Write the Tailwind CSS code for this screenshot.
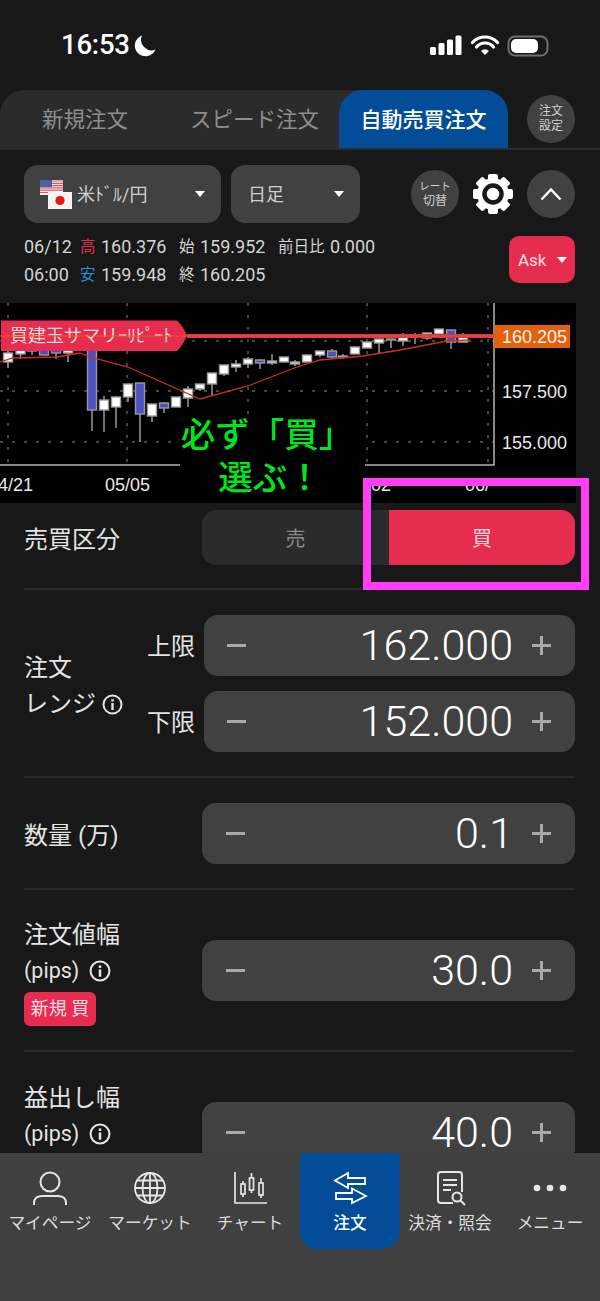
<!DOCTYPE html>
<html lang="ja">
<head>
  <meta charset="UTF-8" />
  <meta name="viewport" content="width=device-width, initial-scale=1.0" />
  <title>自動売買注文</title>
  <script src="https://cdn.jsdelivr.net/npm/@tailwindcss/browser@4"></script>
</head>
<body class="bg-[#181818] font-['Roboto','Noto_Sans_CJK_JP',sans-serif] text-[#e6e6e6]">
<div class="relative flex flex-col w-[600px] h-[1301px] overflow-hidden">

  <!-- status bar -->
  <div class="flex items-center h-[90px] shrink-0 pl-[61px] pr-[50px]">
    <span class="text-[27.500px] font-medium text-white tracking-[-0.2px]">16:53</span>
    <svg class="ml-[4px]" width="23" height="23" viewBox="0 0 23 23"><path d="M8 1.500a10.500 10.500 0 0 0 13.500 14A10.700 10.700 0 1 1 8 1.500z" fill="#fff"/></svg>
    <svg class="ml-auto" width="120" height="24" viewBox="0 0 120 24">
      <rect x="0" y="14" width="6" height="8" rx="1.500" fill="#fff"/>
      <rect x="8.500" y="10" width="6" height="12" rx="1.500" fill="#fff"/>
      <rect x="17" y="6.500" width="6" height="15.500" rx="1.500" fill="#fff"/>
      <rect x="25.500" y="2.500" width="6" height="19.500" rx="1.500" fill="#fff"/>
      <path d="M42.500 9.500a17 17 0 0 1 25 0M46.500 14a11 11 0 0 1 17 0" fill="none" stroke="#fff" stroke-width="3.200" stroke-linecap="round"/>
      <path d="M51 18a5.500 5.500 0 0 1 8 0l-4 4z" fill="#fff"/>
      <rect x="78.500" y="3.500" width="39" height="19" rx="6.500" fill="none" stroke="#6f6f6f" stroke-width="2"/>
      <rect x="81" y="6" width="27" height="14" rx="5" fill="#fff"/>
    </svg>
  </div>

  <!-- order type tabs -->
  <div class="flex items-start h-[60px] shrink-0 border-b-2 border-[#2c2c2c]">
    <div class="flex w-[508px] h-[58px] rounded-tl-[24px] rounded-tr-[24px] bg-[#2b2b2b] text-[21.500px] text-[#8e8e8e]">
      <div class="flex items-center justify-center w-[170px] pt-[3px]">新規注文</div>
      <div class="flex items-center justify-center w-[169px] pt-[3px]">スピード注文</div>
      <div class="flex items-center justify-center w-[169px] pt-[3px] rounded-t-[24px] bg-[#024c98] text-[21px] font-medium text-white">自動売買注文</div>
    </div>
    <div class="flex items-center justify-center w-[48px] h-[48px] mt-[5px] ml-[19px] rounded-full bg-[#414141] text-center text-[12px] leading-[15px] text-[#cfcfcf]">注文<br>設定</div>
  </div>

  <!-- pair and timeframe -->
  <div class="flex items-center h-[58px] mt-[15px] pl-[24px] pr-[25px] shrink-0">
    <div class="flex items-center w-[197px] h-[58px] rounded-[14px] bg-[#414141] pl-[16px] pr-[16px]">
      <svg width="32" height="29" viewBox="0 0 32 29">
        <rect x="0" y="0" width="23" height="15" fill="#f4f4f4"/>
        <path d="M0 1h23M0 3.300h23M0 5.600h23M0 7.900h23M0 10.200h23M0 12.500h23" stroke="#e2545b" stroke-width="1.200"/>
        <rect x="0" y="0" width="12" height="7" fill="#4d5fa8"/>
        <rect x="8" y="12" width="24" height="17" fill="#f4f4f4"/>
        <circle cx="20" cy="20.500" r="4.600" fill="#f01414"/>
      </svg>
      <span class="ml-[5px] pt-[1px] text-[18px] text-[#cfcfcf]">米ﾄﾞﾙ/円</span>
      <span class="ml-auto w-0 h-0 border-x-[5.500px] border-x-transparent border-t-[6px] border-t-white"></span>
    </div>
    <div class="flex items-center w-[129px] h-[58px] ml-[10px] rounded-[14px] bg-[#414141] pl-[17px] pr-[16px]">
      <span class="pt-[1px] text-[18px] text-[#cfcfcf]">日足</span>
      <span class="ml-auto w-0 h-0 border-x-[5.500px] border-x-transparent border-t-[6px] border-t-white"></span>
    </div>
    <div class="flex items-center justify-center w-[48px] h-[48px] ml-[51px] rounded-full bg-[#414141] text-center text-[#cfcfcf] leading-[15px]">
      <div><div class="text-[10.500px]">レート</div><div class="text-[12px]">切替</div></div>
    </div>
    <svg class="ml-[13px]" width="42" height="42" viewBox="0 0 42 42">
      <g fill="#fff">
        <rect x="16" y="1" width="10" height="40" rx="2"/>
        <rect x="16" y="1" width="10" height="40" rx="2" transform="rotate(45 21 21)"/>
        <rect x="16" y="1" width="10" height="40" rx="2" transform="rotate(90 21 21)"/>
        <rect x="16" y="1" width="10" height="40" rx="2" transform="rotate(135 21 21)"/>
        <circle cx="21" cy="21" r="16"/>
      </g>
      <circle cx="21" cy="21" r="8.500" fill="none" stroke="#181818" stroke-width="4.500"/>
    </svg>
    <div class="flex items-center justify-center w-[48px] h-[48px] ml-[13px] rounded-full bg-[#414141]">
      <svg width="22" height="14" viewBox="0 0 22 14"><path d="M1.500 12.500L11 2.500l9.500 10" fill="none" stroke="#fff" stroke-width="2.400"/></svg>
    </div>
  </div>

  <!-- ohlc -->
  <div class="flex items-center h-[47px] mt-[13px] pl-[24px] pr-[25px] shrink-0 text-[18px] text-[#d4d4d4] leading-[28px]">
    <div class="flex flex-col pt-[3px]">
      <div class="flex items-center">
        <span class="w-[56px]">06/12</span><span class="w-[21px] text-[15.500px] text-[#e82c4f]">高</span><span class="w-[78px]">160.376</span><span class="w-[21px] text-[15.500px]">始</span><span class="w-[78px]">159.952</span><span class="w-[52px] text-[15.500px]">前日比</span><span>0.000</span>
      </div>
      <div class="flex items-center">
        <span class="w-[56px]">06:00</span><span class="w-[21px] text-[15.500px] text-[#1f96dc]">安</span><span class="w-[78px]">159.948</span><span class="w-[21px] text-[15.500px]">終</span><span>160.205</span>
      </div>
    </div>
    <div class="flex items-center ml-auto w-[66px] h-[47px] rounded-[10px] bg-[#e72d4f] pl-[9px] text-[17px] text-white/85">
      Ask<span class="ml-[11px] w-0 h-0 border-x-[5.500px] border-x-transparent border-t-[6px] border-t-white"></span>
    </div>
  </div>

  <!-- chart -->
  <div class="h-[200px] w-[576px] mt-[20px] shrink-0 bg-black">
    <svg id="chart" width="576" height="200" viewBox="0 303 576 200" class="block font-['Liberation_Sans',sans-serif]"></svg>
  </div>

  <!-- form -->
  <div class="flex-1 min-h-0 overflow-hidden pl-[24px] pr-[25px]">
    <div class="flex items-start h-[87px] pt-[7px] border-b-2 border-[#2a2a2a]">
      <div class="w-[178px] h-[55px] flex items-center pt-[5px] text-[24px] text-[#e4e4e4]">売買区分</div>
      <div class="flex w-[373px] h-[55px] rounded-[14px] bg-[#2b2b2b] overflow-hidden text-[20px]">
        <div class="flex items-center justify-center w-[187px] pt-[3px] text-[#8a8a8a]">売</div>
        <div class="flex items-center justify-center flex-1 pt-[3px] bg-[#e72d4f] text-[#f5d5db]">買</div>
      </div>
    </div>

    <div class="flex items-center h-[188px] border-b-2 border-[#2a2a2a]">
      <div class="w-[123px] pt-[6px] text-[24px] leading-[36px] text-[#e4e4e4]">
        注文<br>
        <span class="flex items-center">レンジ<svg class="ml-[6px]" width="21" height="21" viewBox="0 0 21 21"><circle cx="10.500" cy="10.500" r="9" fill="none" stroke="#e4e4e4" stroke-width="2"/><rect x="9.300" y="9" width="2.400" height="7" fill="#e4e4e4"/><rect x="9.300" y="5.200" width="2.400" height="2.400" fill="#e4e4e4"/></svg></span>
      </div>
      <div class="flex-1 flex flex-col gap-[15px]">
        <div class="flex items-center">
          <span class="w-[57px] pt-[4px] text-[24px] text-[#e4e4e4]">上限</span>
          <div class="flex items-center w-[371px] h-[61px] rounded-[14px] bg-[#414141] pl-[23px] pr-[24px]">
            <span class="w-[19px] h-[3px] bg-[#a9a9a9]"></span>
            <span class="ml-auto text-[43px] font-light text-white">162.000</span>
            <svg class="ml-[19px]" width="19" height="19" viewBox="0 0 19 19"><path d="M0 9.500h19M9.500 0v19" stroke="#a9a9a9" stroke-width="3"/></svg>
          </div>
        </div>
        <div class="flex items-center">
          <span class="w-[57px] pt-[4px] text-[24px] text-[#e4e4e4]">下限</span>
          <div class="flex items-center w-[371px] h-[61px] rounded-[14px] bg-[#414141] pl-[23px] pr-[24px]">
            <span class="w-[19px] h-[3px] bg-[#a9a9a9]"></span>
            <span class="ml-auto text-[43px] font-light text-white">152.000</span>
            <svg class="ml-[19px]" width="19" height="19" viewBox="0 0 19 19"><path d="M0 9.500h19M9.500 0v19" stroke="#a9a9a9" stroke-width="3"/></svg>
          </div>
        </div>
      </div>
    </div>

    <div class="flex items-center h-[112px] border-b-2 border-[#2a2a2a]">
      <div class="w-[178px] pt-[5px] text-[24px] text-[#e4e4e4]">数量 (万)</div>
      <div class="flex items-center w-[373px] h-[61px] rounded-[14px] bg-[#414141] pl-[24px] pr-[24px]">
        <span class="w-[19px] h-[3px] bg-[#a9a9a9]"></span>
        <span class="ml-auto text-[43px] font-light text-white">0.1</span>
        <svg class="ml-[19px]" width="19" height="19" viewBox="0 0 19 19"><path d="M0 9.500h19M9.500 0v19" stroke="#a9a9a9" stroke-width="3"/></svg>
      </div>
    </div>

    <div class="flex items-center h-[162px] border-b-2 border-[#2a2a2a]">
      <div class="w-[178px] pt-[2px] text-[24px] text-[#e4e4e4]">
        <div class="leading-[36px]">注文値幅</div>
        <div class="flex items-center leading-[36px] text-[21.500px]">(pips)<svg class="ml-[10px]" width="22" height="22" viewBox="0 0 21 21"><circle cx="10.500" cy="10.500" r="9" fill="none" stroke="#e4e4e4" stroke-width="2"/><rect x="9.300" y="9" width="2.400" height="7" fill="#e4e4e4"/><rect x="9.300" y="5.200" width="2.400" height="2.400" fill="#e4e4e4"/></svg></div>
        <div class="flex items-center justify-center mt-[3px] w-[72px] h-[34px] rounded-[6px] bg-[#e72d4f] text-[18px] text-[#f8dfe3]">新規 買</div>
      </div>
      <div class="flex items-center w-[373px] h-[61px] rounded-[14px] bg-[#414141] pl-[24px] pr-[24px]">
        <span class="w-[19px] h-[3px] bg-[#a9a9a9]"></span>
        <span class="ml-auto text-[43px] font-light text-white">30.0</span>
        <svg class="ml-[19px]" width="19" height="19" viewBox="0 0 19 19"><path d="M0 9.500h19M9.500 0v19" stroke="#a9a9a9" stroke-width="3"/></svg>
      </div>
    </div>

    <div class="flex items-start pt-[28px]">
      <div class="w-[178px] text-[24px] text-[#e4e4e4]">
        <div class="leading-[36px]">益出し幅</div>
        <div class="flex items-center leading-[36px] text-[21.500px]">(pips)<svg class="ml-[10px]" width="22" height="22" viewBox="0 0 21 21"><circle cx="10.500" cy="10.500" r="9" fill="none" stroke="#e4e4e4" stroke-width="2"/><rect x="9.300" y="9" width="2.400" height="7" fill="#e4e4e4"/><rect x="9.300" y="5.200" width="2.400" height="2.400" fill="#e4e4e4"/></svg></div>
      </div>
      <div class="flex items-center w-[373px] h-[61px] mt-[22px] rounded-[14px] bg-[#414141] pl-[24px] pr-[24px]">
        <span class="w-[19px] h-[3px] bg-[#a9a9a9]"></span>
        <span class="ml-auto text-[43px] font-light text-white">40.0</span>
        <svg class="ml-[19px]" width="19" height="19" viewBox="0 0 19 19"><path d="M0 9.500h19M9.500 0v19" stroke="#a9a9a9" stroke-width="3"/></svg>
      </div>
    </div>
  </div>

  <!-- bottom nav -->
  <div class="flex items-start h-[148px] shrink-0 bg-[#404040] text-[16.700px] text-[#dcdcdc]">
    <div class="flex flex-col items-center w-[100px] pt-[17px]">
      <svg width="36" height="36" viewBox="0 0 36 36" fill="none" stroke="#e6e6e6" stroke-width="2"><circle cx="18" cy="12" r="9.500"/><path d="M2 35v-2c0-5 4-7 8-7h16c4 0 8 2 8 7v2"/></svg>
      <span class="mt-[6px] leading-[24px] whitespace-nowrap">マイページ</span>
    </div>
    <div class="flex flex-col items-center w-[100px] pt-[17px]">
      <svg width="36" height="36" viewBox="0 0 36 36" fill="none" stroke="#e6e6e6" stroke-width="1.800"><circle cx="18" cy="18" r="15"/><ellipse cx="18" cy="18" rx="7.500" ry="15"/><path d="M18 3v30M3 18h30M5 10.500h26M5 25.500h26"/></svg>
      <span class="mt-[6px] leading-[24px] whitespace-nowrap">マーケット</span>
    </div>
    <div class="flex flex-col items-center w-[100px] pt-[17px]">
      <svg width="36" height="36" viewBox="0 0 36 36" fill="none" stroke="#e6e6e6" stroke-width="1.700"><path d="M3 2v31h32"/><path d="M11 11v3M11 24v3M19.500 3v5M19.500 20v3M29 8v5M29 25v3"/><rect x="9" y="14" width="4" height="10"/><rect x="17.500" y="8" width="4" height="12"/><rect x="27" y="13" width="4" height="12"/></svg>
      <span class="mt-[6px] leading-[24px] whitespace-nowrap">チャート</span>
    </div>
    <div class="flex flex-col items-center w-[100px] h-[96px] pt-[17px] rounded-b-[18px] bg-[#024c98] text-white font-medium">
      <svg width="36" height="36" viewBox="0 0 36 36" fill="none" stroke="#fff" stroke-width="1.800"><path d="M3 10.500L16 3v5h17v6H16v4z"/><path d="M34 26L20 18.500V23H4v6h16v4z"/></svg>
      <span class="mt-[6px] leading-[24px] whitespace-nowrap">注文</span>
    </div>
    <div class="flex flex-col items-center w-[100px] pt-[17px]">
      <svg width="36" height="36" viewBox="0 0 36 36" fill="none" stroke="#e6e6e6" stroke-width="2"><path d="M21 33H9a3 3 0 0 1-3-3V5a3 3 0 0 1 3-3h18a3 3 0 0 1 3 3v17"/><path d="M11 10h14M11 15h14M11 20h8"/><circle cx="25" cy="27" r="4.500"/><path d="M28.500 30.500L33 35"/></svg>
      <span class="mt-[6px] leading-[24px] whitespace-nowrap">決済・照会</span>
    </div>
    <div class="flex flex-col items-center w-[100px] pt-[17px]">
      <svg width="36" height="36" viewBox="0 0 36 36" fill="#e6e6e6"><circle cx="5" cy="18" r="3.300"/><circle cx="18" cy="18" r="3.300"/><circle cx="31" cy="18" r="3.300"/></svg>
      <span class="mt-[6px] leading-[24px] whitespace-nowrap">メニュー</span>
    </div>
  </div>

  <!-- annotation drawn over the screen -->
  <div class="absolute left-[363px] top-[478px] w-[226px] h-[112px] border-[8px] border-[#ff3df5]"></div>
</div>

<script>
  // x, wick top, body top, body bottom, wick bottom, blue?
  const candles = [
    [8,350,353,362,368,0],[20.500,348,350,354,359,0],[32,348,349,351,355,0],[44,348,350,355,355,1],
    [56,348,350,353,359,1],[68,348,350,353,362,0],[92,348,350,410,431,1],[104,396,400,410,432,0],
    [116,396,397,407,428,0],[128,384,384,397,402,0],[140,383,383,414,442,1],[152,404,404,416,422,0],
    [164,402,403,408,413,1],[176,397,397,407,407,0],[188,386,389,398,407,0],[200,384,384,389,391,0],
    [212,373,373,384,395,0],[224,365,365,374,376,0],[236,360,364,367,372,0],[248,357,359,364,368,0],
    [260,359,360,363,369,1],[272,354,361,363,365,0],[284,357,357,362,362,0],[295,360,362,364,366,0],
    [307,355,355,362,362,0],[320,351,351,355,357,0],[332,349,351,357,359,1],[343,354,356,357,359,0],
    [355,347,347,354,354,0],[367,342,342,348,348,0],[379,339,339,343,353,0],[391,339,339,340,348,0],
    [403,333,337,341,346,0],[415,333,336,337,344,0],[427,333,333,338,340,0],[439,329,329,334,334,0],
    [451,330,330,342,349,1],[463,333,337,342,342,0]
  ];

  let s = '';
  // grid
  for (const y of [341, 391, 442]) s += `<line x1="0" x2="494" y1="${y}" y2="${y}" stroke="#8a8a8a" stroke-width="1" stroke-dasharray="3 9"/>`;
  for (const x of [8, 127, 248, 367, 488]) s += `<line x1="${x}" x2="${x}" y1="303" y2="465" stroke="#8a8a8a" stroke-width="1" stroke-dasharray="3 9"/>`;
  // candles
  for (const [x, wt, bt, bb, wb, blue] of candles) {
    s += `<line x1="${x}" x2="${x}" y1="${wt}" y2="${wb}" stroke="#9a9a9a" stroke-width="1.500"/>`;
    s += `<rect x="${x - 4.500}" y="${bt}" width="9" height="${Math.max(bb - bt, 1)}" fill="${blue ? '#4b50c4' : '#fff'}" stroke="#9a9a9a" stroke-width="1.400"/>`;
  }
  // moving average
  s += `<polyline fill="none" stroke="#c8301c" stroke-width="1.300" points="0,362 13,358 57,357 80,353 90,357 128,367 200,399 248,386 297,367 320,360 363,356 400,350 447,341 470,340"/>`;
  // axes
  s += `<path d="M494 303V465H0" fill="none" stroke="#b5b5b5" stroke-width="1.500"/>`;
  // position pill and current rate line
  s += `<path d="M1 320.500H177Q183 326 187 335.500 183 345 177 351H1z" fill="#e72d4f"/>`;
  s += `<text x="10" y="342" font-size="18" fill="#f7d9de" style="font-family:'Noto Sans CJK JP',sans-serif">買建玉サマリｰﾘﾋﾟｰﾄ</text>`;
  s += `<line x1="187" x2="495" y1="336" y2="336" stroke="#e72d4f" stroke-width="4"/>`;
  s += `<line x1="0" x2="495" y1="336" y2="336" stroke="#e2620a" stroke-width="1.200"/>`;
  s += `<rect x="494" y="325" width="76" height="23" fill="#e2620a"/>`;
  s += `<text x="502" y="343" font-size="18" fill="#f0f0f0">160.205</text>`;
  s += `<text x="502" y="398" font-size="18" fill="#e8e8e8">157.500</text>`;
  s += `<text x="502" y="449" font-size="18" fill="#e8e8e8">155.000</text>`;
  // x axis
  s += `<text x="-2" y="491" font-size="18" fill="#e8e8e8">4/21</text>`;
  s += `<text x="105" y="491" font-size="18" fill="#e8e8e8">05/05</text>`;
  s += `<text x="371" y="491" font-size="18" fill="#e8e8e8">02</text>`;
  s += `<text x="465" y="491" font-size="18" fill="#e8e8e8">06/</text>`;
  // pasted note
  s += `<rect x="180" y="415" width="185" height="88" fill="#000"/>`;
  s += `<text x="267" y="447" text-anchor="middle" font-size="34.500" font-weight="500" fill="#00e51c" style="font-family:'Noto Sans CJK JP',sans-serif">必ず「買」</text>`;
  s += `<text x="270" y="490" text-anchor="middle" font-size="34.500" font-weight="500" fill="#00e51c" style="font-family:'Noto Sans CJK JP',sans-serif">選ぶ！</text>`;
  document.getElementById('chart').innerHTML = s;
</script>
</body>
</html>
